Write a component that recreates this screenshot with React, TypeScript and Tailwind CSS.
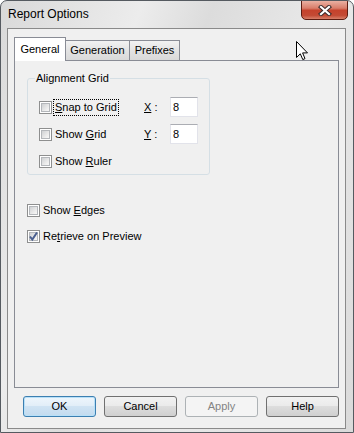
import React from "react";

function CheckBox({ checked }: { checked?: boolean }) {
  return (
    <span className="relative flex h-[13px] w-[13px] shrink-0 items-center justify-center border border-[#8e8f8f] bg-white">
      <span className="h-[9px] w-[9px] border border-[#b4b7bb] bg-[linear-gradient(135deg,#cfd1d3,#eeeeee_70%,#f7f7f7)]" />
      {checked && (
        <svg className="absolute left-[-1px] top-[-1px]" width="13" height="13" viewBox="0 0 13 13">
          <path d="M3 6.5 L5.3 9.5 L10 2.5" fill="none" stroke="#4a5f8f" strokeWidth="2" />
        </svg>
      )}
    </span>
  );
}

function Option({
  children,
  checked,
  focused,
}: {
  children: React.ReactNode;
  checked?: boolean;
  focused?: boolean;
}) {
  return (
    <div className="flex items-center">
      <CheckBox checked={checked} />
      <span
        className={`ml-[1px] px-[1px] leading-[15px] border border-dotted ${
          focused ? "border-black" : "border-transparent"
        }`}
      >
        {children}
      </span>
    </div>
  );
}

function NumBox({ value }: { value: string }) {
  return (
    <div className="flex h-[20px] w-[28px] items-center border border-[#e2e3ea] border-t-[#abadb3] bg-white pl-[2px]">
      {value}
    </div>
  );
}

function Button({
  children,
  variant,
}: {
  children: React.ReactNode;
  variant?: "default" | "disabled";
}) {
  let cls =
    "border-[#707070] bg-[linear-gradient(#f2f2f2,#ebebeb_45%,#dddddd_50%,#cfcfcf)] text-black";
  if (variant === "default")
    cls =
      "border-[#3c7fb1] bg-[linear-gradient(#eef6fc,#e2eef8_45%,#cfe3f3_50%,#c3dbef)] text-black shadow-[inset_0_0_0_1px_#b8e0f8]";
  if (variant === "disabled") cls = "border-[#adb2b5] bg-[#f4f4f4] text-[#838383]";
  return (
    <div
      className={`flex h-[21px] w-[73px] items-center justify-center rounded-[3px] border ${cls}`}
    >
      {children}
    </div>
  );
}

export default function App() {
  return (
    <div className="relative h-[433px] w-[354px] overflow-hidden rounded-t-[7px] border border-[#555a60] bg-[linear-gradient(110deg,#d9d9d9_0%,#ececec_28%,#dcdcdc_42%,#e9e9e9_65%,#dadada_100%)] font-['Liberation_Sans',Arial,sans-serif] text-[11px] text-black">
      {/* title bar */}
      <div className="flex h-[27px] items-start justify-between">
        <div className="pl-[7px] pt-[5px] text-[12px] leading-[16px]">Report Options</div>
        <div className="mr-[5px] mt-[-1px] flex h-[20px] w-[47px] items-center justify-center rounded-b-[5px] border border-[#5c1d12] bg-[linear-gradient(#eab0a2,#d97d6a_40%,#c5422c_52%,#c34a34_80%,#d8806a)]">
          <svg width="14" height="11" viewBox="0 0 14 11">
            <path d="M3 2 L11 9 M11 2 L3 9" stroke="#3b2b2b" strokeWidth="4.2" strokeLinecap="square" />
            <path d="M3 2 L11 9 M11 2 L3 9" stroke="#ffffff" strokeWidth="2.2" strokeLinecap="square" />
          </svg>
        </div>
      </div>

      {/* client area */}
      <div className="ml-[6px] flex h-[401px] w-[339px] flex-col border border-[#8a8a8a] bg-[#f0f0f0]">
        <div className="px-[6px] pt-[8px]">
          <div className="flex h-[23px] items-end">
            <div className="relative z-10 mb-[-1px] flex h-[24px] w-[52px] items-center justify-center border border-b-0 border-[#898c95] bg-white">
              General
            </div>
            <div className="flex h-[20px] w-[64px] items-center justify-center border border-b-0 border-l-0 border-[#898c95] bg-[linear-gradient(#f2f2f2,#e3e3e3_50%,#d9d9d9)]">
              Generation
            </div>
            <div className="flex h-[20px] w-[50px] items-center justify-center border border-b-0 border-l-0 border-[#898c95] bg-[linear-gradient(#f2f2f2,#e3e3e3_50%,#d9d9d9)]">
              Prefixes
            </div>
          </div>

          <div className="flex h-[328px] w-[325px] flex-col border border-[#898c95] bg-[#f0f0f0] pl-[12px]">
            <fieldset className="mt-[11px] h-[103px] w-[183px] rounded-[3px] border border-[#d5dfe5]">
              <legend className="ml-[7px] px-[1px] leading-[13px]">Alignment Grid</legend>
              <div className="flex flex-col gap-[7px] pl-[11px] pt-[12px]">
                <div className="flex h-[20px] items-center">
                  <div className="w-[105px]">
                    <Option focused>
                      <u>S</u>nap to Grid
                    </Option>
                  </div>
                  <span className="w-[26px]">
                    <u>X</u> :
                  </span>
                  <NumBox value="8" />
                </div>
                <div className="flex h-[20px] items-center">
                  <div className="w-[105px]">
                    <Option>
                      Show <u>G</u>rid
                    </Option>
                  </div>
                  <span className="w-[26px]">
                    <u>Y</u> :
                  </span>
                  <NumBox value="8" />
                </div>
                <div className="flex h-[20px] items-center">
                  <Option>
                    Show <u>R</u>uler
                  </Option>
                </div>
              </div>
            </fieldset>

            <div className="mt-[25px] flex h-[20px] items-center">
              <Option>
                Show <u>E</u>dges
              </Option>
            </div>
            <div className="mt-[6px] flex h-[20px] items-center">
              <Option checked>
                Re<u>t</u>rieve on Preview
              </Option>
            </div>
          </div>
        </div>

        <div className="mt-[8px] flex gap-[8px] pl-[15px]">
          <Button variant="default">OK</Button>
          <Button>Cancel</Button>
          <Button variant="disabled">Apply</Button>
          <Button>Help</Button>
        </div>
      </div>

      {/* mouse pointer */}
      <svg className="absolute left-[295px] top-[40px]" width="13" height="21" viewBox="0 0 13 21">
        <path
          d="M0.5 0.5 L0.5 16.5 L4.3 12.8 L6.8 18.6 L9 17.6 L6.6 11.9 L11.5 11.9 Z"
          fill="#ffffff"
          stroke="#000000"
          strokeWidth="1"
          strokeLinejoin="miter"
        />
      </svg>
    </div>
  );
}
